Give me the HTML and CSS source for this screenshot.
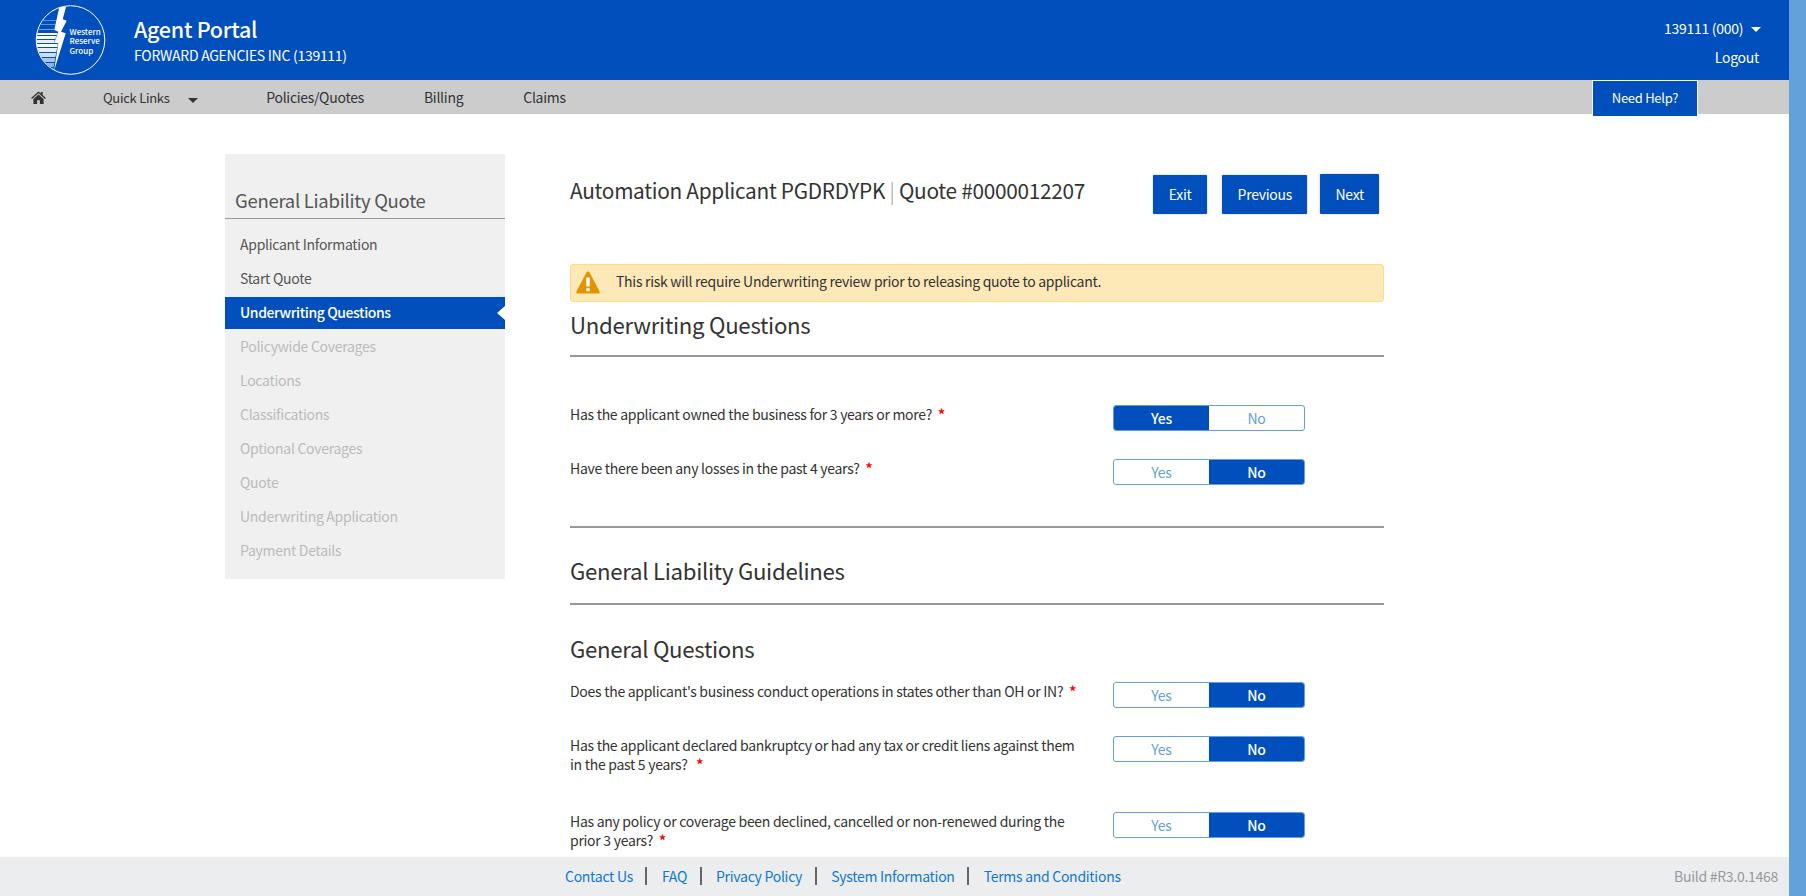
FILE: index.html
```html
<!DOCTYPE html>
<html lang="en">
  <head>
    <meta charset="UTF-8" />
    <meta name="viewport" content="width=device-width, initial-scale=1.0" />
    <title>Agent Portal</title>
    <link rel="stylesheet" href="styles.css">
  </head>
  <body>
    <div class="page">
      <header class="topbar">
        <svg class="logo" viewBox="0 0 72 72" width="72" height="72" role="img" aria-label="Western Reserve Group">
          <defs>
            <clipPath id="logo-left">
              <path d="M27 0 L2 0 L2 72 L19 66 L24 39 L20 38 L24 28 L20 26 Z" />
            </clipPath>
            <clipPath id="logo-circle">
              <circle cx="36.500" cy="36" r="34" />
            </clipPath>
          </defs>
          <circle cx="36.500" cy="36" r="34.300" fill="#004fbc" stroke="#fff" stroke-width="1" />
          <g clip-path="url(#logo-left)">
            <g clip-path="url(#logo-circle)">
              <rect x="0" y="16" width="40" height="1" fill="#5b8ed6" />
              <rect x="0" y="20" width="40" height="1" fill="#5b8ed6" />
              <rect x="0" y="25" width="40" height="1" fill="#6f9ddc" />
              <rect x="0" y="29" width="40" height="2" fill="#fff" />
              <rect x="0" y="32" width="40" height="3" fill="#fff" />
              <rect x="0" y="36" width="40" height="3" fill="#e8f0fa" />
              <rect x="0" y="40" width="40" height="3" fill="#fff" />
              <rect x="0" y="44" width="40" height="4" fill="#e4edf9" />
              <rect x="0" y="49" width="40" height="4" fill="#cfdff5" />
              <rect x="0" y="54" width="40" height="4" fill="#a9c5ec" />
              <rect x="0" y="59" width="40" height="4" fill="#8fb3e5" />
              <rect x="0" y="64" width="40" height="3" fill="#a9c5ec" />
            </g>
          </g>
          <path d="M25.300 3 L32 3 L28.700 15.300 L32.700 16.700 L27 27.700 L31.700 29.300 L20 67 L24.300 39.300 L20.300 38.700 L24.300 27.700 L20.300 26 Z" fill="#fff" />
          <text class="logo-text" x="35.500" y="30.500">Western</text>
          <text class="logo-text" x="35.500" y="40">Reserve</text>
          <text class="logo-text" x="35.500" y="49.500">Group</text>
        </svg>
        <div class="brand">
          <div class="brand-title">Agent Portal</div>
          <div class="brand-sub">FORWARD AGENCIES INC (139111)</div>
        </div>
        <div class="account">
          <div class="account-id">139111 (000) <span class="caret caret-white"></span></div>
          <div class="logout">Logout</div>
        </div>
      </header>

      <nav class="navbar">
        <svg class="home-icon" viewBox="0 0 16 14" width="15" height="13">
          <path d="M8 0.500 L10.500 2.700 V1.200 H12.500 V4.400 L16 7.500 L15 8.600 L8 2.500 L1 8.600 L0 7.500 Z" fill="#333" />
          <path d="M8 3.700 L13.500 8.500 V14 H9.500 V10 H6.500 V14 H2.500 V8.500 Z" fill="#333" />
        </svg>
        <a class="nav-link quick">Quick Links <span class="caret caret-dark"></span></a>
        <a class="nav-link policies">Policies/Quotes</a>
        <a class="nav-link billing">Billing</a>
        <a class="nav-link claims">Claims</a>
        <a class="need-help">Need Help?</a>
      </nav>

      <div class="content">
        <aside class="sidebar">
          <h3 class="side-title">General Liability Quote</h3>
          <ul class="steps">
            <li>Applicant Information</li>
            <li>Start Quote</li>
            <li class="active">Underwriting Questions</li>
            <li class="off">Policywide Coverages</li>
            <li class="off">Locations</li>
            <li class="off">Classifications</li>
            <li class="off">Optional Coverages</li>
            <li class="off">Quote</li>
            <li class="off">Underwriting Application</li>
            <li class="off">Payment Details</li>
          </ul>
        </aside>

        <main class="main">
          <div class="quote-head">
            <h1 class="quote-title">Automation Applicant PGDRDYPK <span class="pipe">|</span> Quote #0000012207</h1>
            <div class="actions">
              <button class="btn">Exit</button>
              <button class="btn">Previous</button>
              <button class="btn btn-next">Next</button>
            </div>
          </div>

          <div class="alert">
            <svg class="alert-icon" viewBox="0 0 24 23" width="24" height="23">
              <path d="M12 0.500 Q13 0.500 13.600 1.500 L23.600 20.500 Q24.300 22.500 22.400 22.500 H1.600 Q-0.300 22.500 0.400 20.500 L10.400 1.500 Q11 0.500 12 0.500 Z" fill="#e39400" />
              <rect x="10.300" y="6.500" width="3.400" height="9" fill="#fff" />
              <rect x="10.300" y="17.300" width="3.400" height="3" fill="#fff" />
            </svg>
            <span class="alert-text">This risk will require Underwriting review prior to releasing quote to applicant.</span>
          </div>

          <h2 class="section-title first">Underwriting Questions</h2>
          <hr class="rule" />

          <div class="question q-first">
            <div class="q-text">Has the applicant owned the business for 3 years or more? <span class="req">*</span></div>
            <div class="toggle"><span class="on">Yes</span><span>No</span></div>
          </div>
          <div class="question q-second">
            <div class="q-text">Have there been any losses in the past 4 years? <span class="req">*</span></div>
            <div class="toggle"><span>Yes</span><span class="on">No</span></div>
          </div>
          <hr class="rule" />

          <h2 class="section-title guide">General Liability Guidelines</h2>
          <hr class="rule" />

          <h2 class="section-title general">General Questions</h2>

          <div class="question q-general">
            <div class="q-text">Does the applicant's business conduct operations in states other than OH or IN? <span class="req">*</span></div>
            <div class="toggle"><span>Yes</span><span class="on">No</span></div>
          </div>
          <div class="question q-bankrupt">
            <div class="q-text">Has the applicant declared bankruptcy or had any tax or credit liens against them in the past 5 years? &nbsp;<span class="req">*</span></div>
            <div class="toggle"><span>Yes</span><span class="on">No</span></div>
          </div>
          <div class="question q-declined">
            <div class="q-text">Has any policy or coverage been declined, cancelled or non-renewed during the prior 3 years? <span class="req">*</span></div>
            <div class="toggle"><span>Yes</span><span class="on">No</span></div>
          </div>
        </main>
      </div>

      <footer class="footer">
        <div class="footer-links">
          <a>Contact Us</a>
          <a>FAQ</a>
          <a>Privacy Policy</a>
          <a>System Information</a>
          <a>Terms and Conditions</a>
        </div>
        <div class="build">Build #R3.0.1468</div>
      </footer>
    </div>
    <div class="scrollbar"></div>
  </body>
</html>
```

FILE: styles.css
```css
:root {
  --blue: #004fbc;
  --sky: #62a1da;
}

* {
  box-sizing: border-box;
}

html,
body {
  height: 100%;
}

body {
  margin: 0;
  display: flex;
  overflow: hidden;
  font-family: "Noto Sans CJK SC", "Source Sans Pro", "Noto Sans", sans-serif;
  font-size: 14px;
  line-height: 19px;
  letter-spacing: -0.02em;
  color: #333;
  background: #fff;
}

.page {
  flex: 1;
  min-width: 0;
  height: 100%;
  display: flex;
  flex-direction: column;
}

.scrollbar {
  width: 17px;
  background: var(--sky);
}

/* header */
.topbar {
  height: 80px;
  flex: none;
  display: flex;
  align-items: center;
  padding: 0 30px 0 34px;
  background: var(--blue);
  color: #fff;
}

.logo {
  flex: none;
}

.logo-text {
  font-size: 8px;
  font-weight: 500;
  letter-spacing: 0;
  fill: #fff;
}

.brand {
  margin-left: 28px;
}

.brand-title {
  font-size: 21.500px;
  line-height: 30px;
  font-weight: 500;
  margin-top: -1px;
}

.brand-sub {
  font-size: 14px;
  line-height: 20px;
  margin-top: 1px;
}

.account {
  margin-left: auto;
  padding-top: 6px;
  text-align: right;
}

.account-id {
  margin-bottom: 10px;
  margin-right: -2px;
}

.caret {
  display: inline-block;
  width: 0;
  height: 0;
  border-left: 5px solid transparent;
  border-right: 5px solid transparent;
  border-top: 5px solid;
  vertical-align: 2px;
}

.caret-white {
  border-top-color: #fff;
  margin-left: 5px;
}

.caret-dark {
  border-top-color: #333;
  margin-left: 16px;
  vertical-align: 0;
}

/* nav */
.navbar {
  height: 34px;
  flex: none;
  display: flex;
  align-items: center;
  padding-left: 31px;
  background: #ccc;
}

.home-icon {
  flex: none;
}

.nav-link {
  color: #333;
}

.quick {
  margin-left: 57px;
  font-size: 13px;
}

.policies {
  margin-left: 68px;
}

.billing {
  margin-left: 60px;
}

.claims {
  margin-left: 60px;
}

.need-help {
  margin-left: auto;
  margin-right: 91px;
  align-self: flex-start;
  width: 106px;
  height: 36px;
  padding-bottom: 2px;
  display: flex;
  align-items: center;
  justify-content: center;
  background: var(--blue);
  border: 1px solid #fff;
  border-bottom: 0;
  color: #fff;
  font-size: 13px;
}

/* body layout */
.content {
  flex: 1;
  min-height: 0;
  overflow: hidden;
  display: flex;
  align-items: flex-start;
  padding: 40px 0 0 225px;
}

.sidebar {
  width: 280px;
  height: 425px;
  flex: none;
  background: #f0f0f0;
}

.side-title {
  margin: 0;
  padding: 33px 0 4px 10px;
  font-size: 18.500px;
  line-height: 27px;
  font-weight: 400;
  color: #555;
  border-bottom: 1px solid #999;
}

.steps {
  list-style: none;
  margin: 8px 0 0;
  padding: 0;
}

.steps li {
  height: 34px;
  line-height: 34px;
  padding-left: 15px;
  color: #555;
}

.steps .active {
  position: relative;
  height: 32px;
  line-height: 31px;
  margin-top: 2px;
  margin-bottom: 1px;
  background: var(--blue);
  color: #fff;
  font-weight: 500;
  letter-spacing: -0.03em;
}

.steps .active + li {
  margin-top: -1px;
}

.steps .active::after {
  content: "";
  position: absolute;
  right: 0;
  top: 9px;
  border-top: 7px solid transparent;
  border-bottom: 7px solid transparent;
  border-right: 8px solid #fff;
}

.steps .off {
  color: #bbb;
}

.main {
  width: 814px;
  margin-left: 65px;
  flex: none;
}

.quote-head {
  display: flex;
  justify-content: space-between;
  align-items: flex-start;
  height: 110px;
}

.quote-title {
  margin: 21px 0 0;
  font-size: 20.800px;
  line-height: 30px;
  font-weight: 400;
  color: #333;
}

.pipe {
  color: #999;
  font-weight: 300;
}

.actions {
  display: flex;
  margin: 21px 5px 0 0;
}

.btn {
  height: 39px;
  padding: 0 15.500px;
  margin-left: 15px;
  background: var(--blue);
  border: 0;
  border-radius: 1px;
  box-shadow: 0 0 2px #bbb;
  color: #fff;
  font: inherit;
  letter-spacing: inherit;
}

.btn-next {
  padding: 0 15px;
  margin-left: 13px;
  height: 40px;
  margin-top: -1px;
}

.alert {
  height: 38px;
  display: flex;
  align-items: center;
  gap: 16px;
  padding-left: 5px;
  background: #fde8b8;
  border: 1px solid #fbdc8c;
  border-radius: 3px;
  color: #333;
}

.alert-icon {
  flex: none;
  margin-top: -2px;
}

.alert-text {
  margin-top: -4px;
}

.section-title {
  margin: 0;
  font-size: 22.200px;
  line-height: 30px;
  font-weight: 400;
  color: #333;
}

.section-title.first {
  margin-top: 7px;
  height: 46px;
}

.section-title.guide {
  margin-top: 27px;
  height: 48px;
}

.section-title.general {
  margin-top: 28px;
  height: 32px;
}

.rule {
  margin: 0;
  border: 0;
  height: 2px;
  background: #999;
}

.question {
  display: grid;
  grid-template-columns: 543px 192px;
  align-items: start;
}

.q-first {
  margin-top: 48px;
}

.q-second {
  margin-top: 28px;
  height: 67px;
}

.q-general {
  margin-top: 17px;
}

.q-bankrupt {
  margin-top: 28px;
}

.q-declined {
  margin-top: 38px;
}

.q-text {
  color: #333;
  padding-right: 28px;
}

.req {
  display: inline-block;
  color: #f00;
  font-size: 14px;
  line-height: 14px;
  font-weight: 700;
  margin-left: 3px;
}

.toggle {
  display: flex;
  height: 26px;
  border: 1px solid var(--sky);
  border-radius: 3px;
  overflow: hidden;
  color: var(--sky);
}

.toggle span {
  flex: 1;
  text-align: center;
  line-height: 24px;
}

.toggle .on {
  background: var(--blue);
  color: #fff;
  font-weight: 500;
}

/* footer */
.footer {
  position: fixed;
  left: 0;
  right: 17px;
  bottom: 0;
  height: 39px;
  display: flex;
  align-items: center;
  background: #ecedef;
  padding: 0 11px 0 565px;
}

.footer-links {
  display: flex;
  align-items: center;
  margin-bottom: 2px;
}

.footer-links a {
  color: #0f78d2;
  line-height: 18px;
  padding: 0 12.500px 0 0;
  margin-right: 14.500px;
  border-right: 2px solid #666;
}

.footer-links a:last-child {
  border-right: 0;
}

.build {
  margin-left: auto;
  color: #999;
}
```
